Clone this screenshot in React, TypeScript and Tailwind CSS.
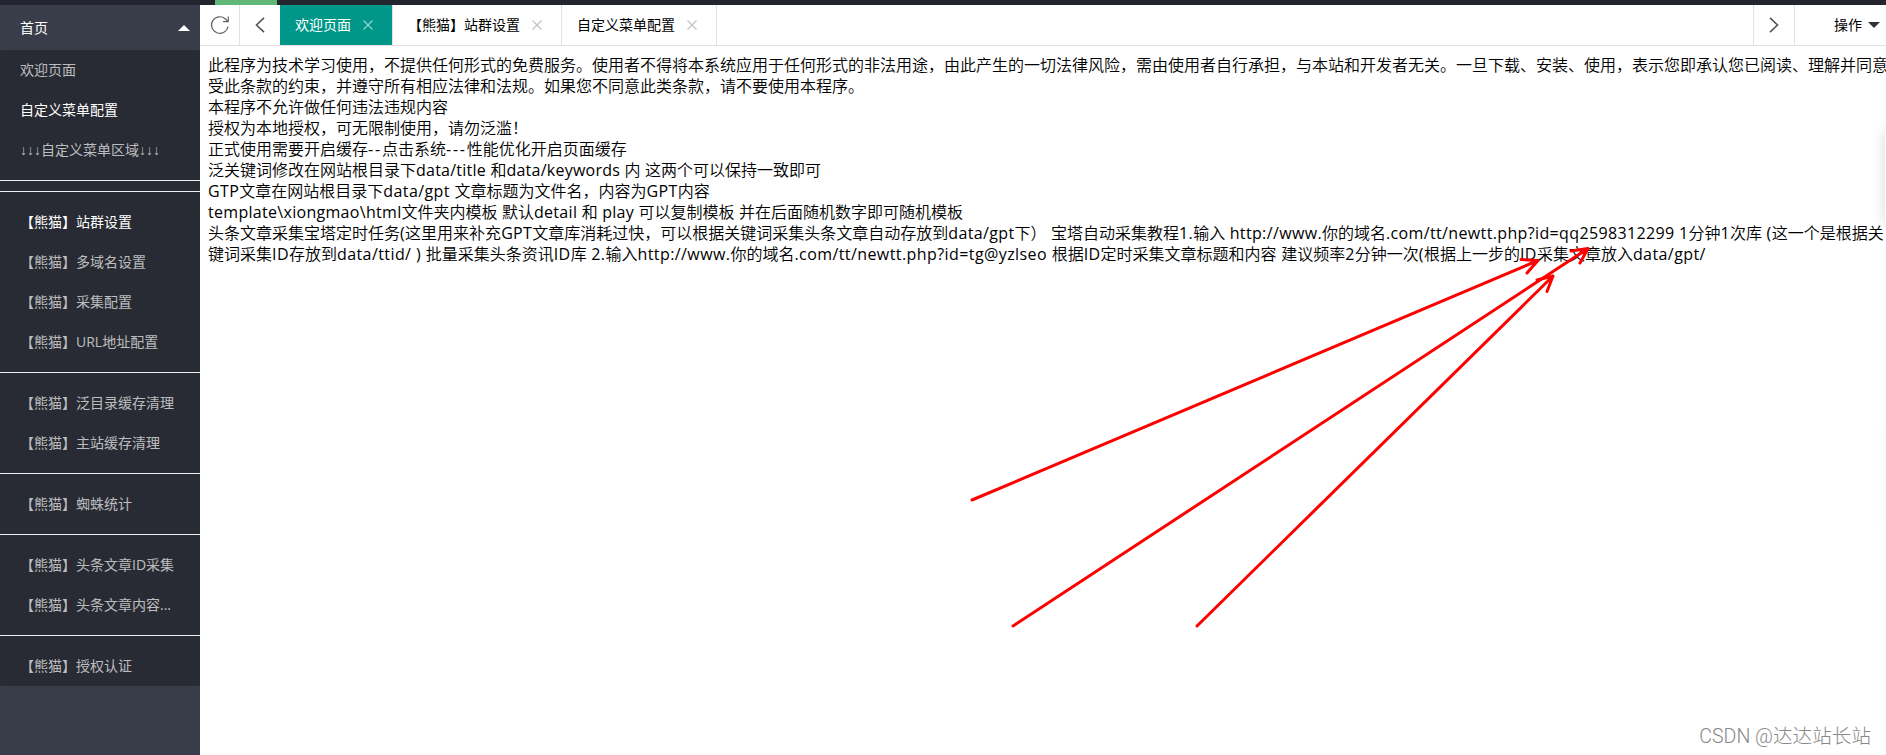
const menuGroups = [
  ['欢迎页面', '自定义菜单配置', '↓↓↓自定义菜单区域↓↓↓'],
  [],
  ['【熊猫】站群设置', '【熊猫】多域名设置', '【熊猫】采集配置', '【熊猫】URL地址配置'],
  ['【熊猫】泛目录缓存清理', '【熊猫】主站缓存清理'],
  ['【熊猫】蜘蛛统计'],
  ['【熊猫】头条文章ID采集', '【熊猫】头条文章内容...'],
  ['【熊猫】授权认证'],
]

const highlighted = ['自定义菜单配置', '【熊猫】站群设置']

const tabs = [
  { name: '欢迎页面', active: true },
  { name: '【熊猫】站群设置', active: false },
  { name: '自定义菜单配置', active: false },
]

const notice = [
  { text: '此程序为技术学习使用，不提供任何形式的免费服务。使用者不得将本系统应用于任何形式的非法用途，由此产生的一切法律风险，需由使用者自行承担，与本站和开发者无关。一旦下载、安装、使用，表示您即承认您已阅读、理解并同意', tracking: '' },
  { text: '受此条款的约束，并遵守所有相应法律和法规。如果您不同意此类条款，请不要使用本程序。', tracking: '' },
  { text: '本程序不允许做任何违法违规内容', tracking: '' },
  { text: '授权为本地授权，可无限制使用，请勿泛滥！', tracking: '' },
  { text: '正式使用需要开启缓存--点击系统---性能优化开启页面缓存', tracking: 'tracking-[1.8px]' },
  { text: '泛关键词修改在网站根目录下data/title 和data/keywords 内 这两个可以保持一致即可', tracking: 'tracking-[0.24px]' },
  { text: 'GTP文章在网站根目录下data/gpt 文章标题为文件名，内容为GPT内容', tracking: 'tracking-[0.4px]' },
  { text: 'template\\xiongmao\\html文件夹内模板 默认detail 和 play 可以复制模板 并在后面随机数字即可随机模板', tracking: 'tracking-[0.3px]' },
  { text: '头条文章采集宝塔定时任务(这里用来补充GPT文章库消耗过快，可以根据关键词采集头条文章自动存放到data/gpt下） 宝塔自动采集教程1.输入 http://www.你的域名.com/tt/newtt.php?id=qq2598312299 1分钟1次库 (这一个是根据关', tracking: 'tracking-[0.36px]' },
  { text: '键词采集ID存放到data/ttid/ ) 批量采集头条资讯ID库 2.输入http://www.你的域名.com/tt/newtt.php?id=tg@yzlseo 根据ID定时采集文章标题和内容 建议频率2分钟一次(根据上一步的ID采集文章放入data/gpt/', tracking: 'tracking-[0.42px]' },
]

const arrows = [
  'M972 500 L1538 260.500 M1521 259.500 L1538 260.500 L1527 273',
  'M1013 626 L1588 248.500 M1571 251 L1588 248.500 L1580 263',
  'M1197 626 L1553 276 M1537 280 L1553 276 L1547 291.500',
]

const CloseIcon = ({ className }: { className: string }) => (
  <svg viewBox="0 0 10 10" className={className} fill="none" stroke="currentColor" strokeWidth="1.1">
    <path d="M.5 .5 L9.500 9.500 M9.500 .5 L.5 9.500" />
  </svg>
)

// Arrows use the half-width glyphs of Liberation Sans
const MenuLabel = ({ text }: { text: string }) => (
  <>
    {text.split(/(↓+)/).map((part, index) =>
      index % 2 ? <span key={index} className="font-['Liberation_Sans',sans-serif]">{part}</span> : part
    )}
  </>
)

const Sidebar = () => (
  <aside className="w-[200px] flex-none bg-[#393d49] text-sm text-white">
    <div className="flex h-[45px] items-center justify-between pr-[10px] pl-5">
      <span>首页</span>
      <svg viewBox="0 0 12 6" className="h-1.5 w-3 fill-white">
        <path d="M0 6 L6 0 L12 6 Z" />
      </svg>
    </div>
    <nav className="rounded-[2px] bg-[#282b33]">
      {menuGroups.map((items, index) => (
        <div key={index}>
          {index > 0 && <hr className="my-[10px] border-[#eee]" />}
          {items.map((item) => (
            <a
              key={item}
              href="#"
              className={`block h-10 truncate px-5 leading-10 ${highlighted.includes(item) ? 'text-white' : 'text-white/70'}`}
            >
              <MenuLabel text={item} />
            </a>
          ))}
        </div>
      ))}
    </nav>
  </aside>
)

const TabBar = () => (
  <div className="flex h-[41px] flex-none border-b border-[#e2e2e2] bg-white text-sm text-black">
    <button className="flex w-10 items-center justify-center border-r border-[#e2e2e2] text-[#666]">
      <svg viewBox="0 0 20 20" className="size-5" fill="none" stroke="currentColor" strokeWidth="1.2">
        <path d="M18 11.500 A8.300 8.300 0 1 1 15.500 4 L18 6.500 M18.300 1.500 V6.600 H13" />
      </svg>
    </button>
    <button className="flex w-10 items-center justify-center text-[#555]">
      <svg viewBox="0 0 10 16" className="h-4 w-2.5" fill="none" stroke="currentColor" strokeWidth="1.6">
        <path d="M9 .8 L1.500 8 L9 15.200" />
      </svg>
    </button>
    {tabs.map((tab) => (
      <div
        key={tab.name}
        className={`flex items-center gap-3 border-r border-[#e2e2e2] pr-[19px] pl-[15px] ${tab.active ? 'bg-[#009688] text-white' : ''}`}
      >
        <span>{tab.name}</span>
        <CloseIcon className={tab.active ? 'size-2.5 text-white/60' : 'size-2.5 text-[#c2c2c2]'} />
      </div>
    ))}
    <div className="ml-auto flex">
      <button className="flex w-[42px] items-center justify-center border-x border-[#e2e2e2] text-[#555]">
        <svg viewBox="0 0 10 16" className="h-4 w-2.5" fill="none" stroke="currentColor" strokeWidth="1.6">
          <path d="M1 .8 L8.500 8 L1 15.200" />
        </svg>
      </button>
      <div className="flex w-[91px] items-center justify-end gap-1.5 pr-1.5">
        <span>操作</span>
        <svg viewBox="0 0 12 6" className="h-1.5 w-3 fill-[#333]">
          <path d="M0 0 H12 L6 6 Z" />
        </svg>
      </div>
    </div>
  </div>
)

// Latin runs get their own letter spacing, the CJK text keeps its 16px grid
const NoticeLine = ({ text, tracking }: { text: string; tracking: string }) => (
  <p className="h-[21px] whitespace-pre leading-[21px]">
    {text.split(/([\x20-\x7e]+)/).map((part, index) =>
      index % 2 ? <span key={index} className={`font-normal ${tracking}`}>{part}</span> : part
    )}
  </p>
)

const App = () => {
  return (
    <div className="relative flex h-[755px] w-full flex-col overflow-hidden bg-white font-['Open_Sans','Noto_Sans_CJK_SC',sans-serif]">
      <div className="h-[5px] flex-none bg-[#23262e]">
        <div className="ml-[215px] h-full w-[62px] bg-[#5fb878]" />
      </div>
      <div className="flex min-h-0 flex-1">
        <Sidebar />
        <main className="flex min-w-0 flex-1 flex-col">
          <TabBar />
          <div className="overflow-hidden pt-[9px] pl-2 text-base font-[350] text-black">
            {notice.map((line) => (
              <NoticeLine key={line.text} text={line.text} tracking={line.tracking} />
            ))}
          </div>
        </main>
      </div>

      {/* edges of the floating panels docked off the right side */}
      <div className="absolute top-[130px] -right-10 h-[94px] w-[41px] rounded bg-white shadow-[0_0_14px_rgba(0,0,0,0.16)]" />
      <div className="absolute top-[425px] -right-10 h-[100px] w-10 shadow-[0_0_24px_rgba(0,0,0,0.03)]" />

      <svg viewBox="0 0 1886 755" className="pointer-events-none absolute inset-0 h-full w-full" fill="none" stroke="#f00" strokeWidth="3" strokeLinecap="round" strokeLinejoin="round">
        {arrows.map((d) => (
          <path key={d} d={d} />
        ))}
      </svg>
      <div className="absolute right-[15px] bottom-1 font-['Roboto','Noto_Sans_CJK_SC',sans-serif] text-[19.600px] font-light text-[#888]">CSDN @达达站长站</div>
    </div>
  )
}

export default App
